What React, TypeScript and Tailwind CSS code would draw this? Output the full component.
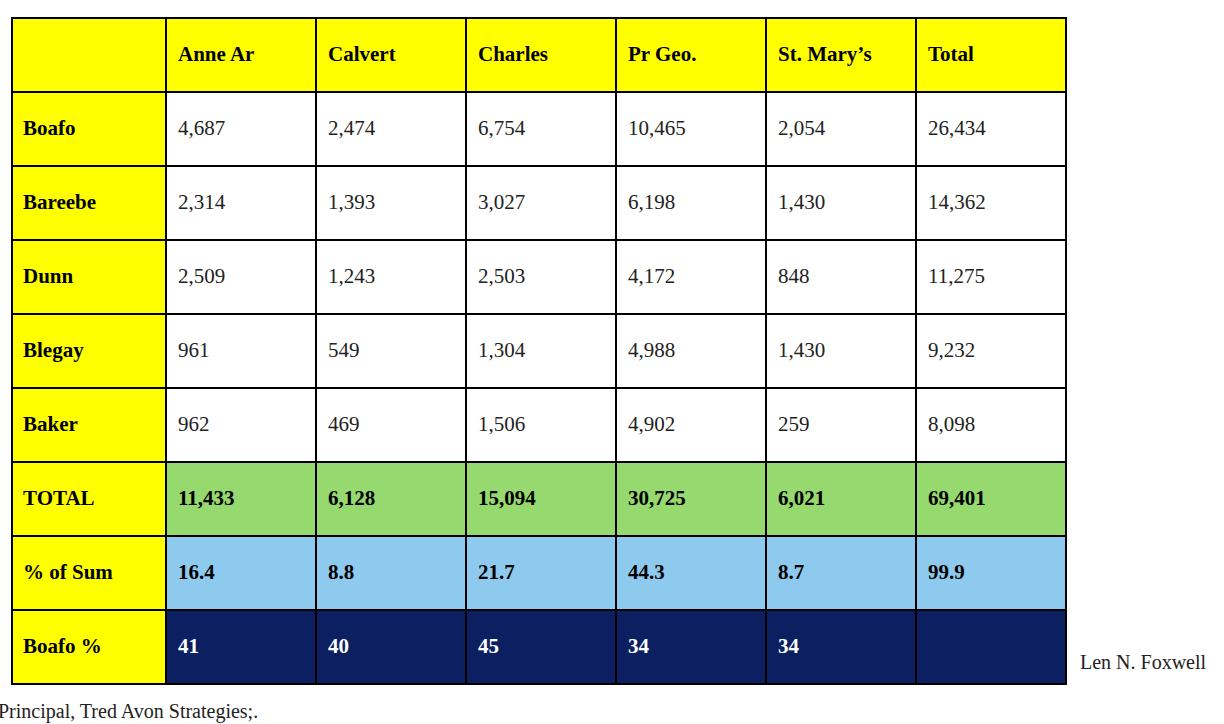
import { Fragment } from 'react';

const cols = ['Anne Ar', 'Calvert', 'Charles', 'Pr Geo.', 'St. Mary\u2019s', 'Total'];

type Row = {
  label: string;
  values: string[];
  cell: string;
};

const rows: Row[] = [
  { label: 'Boafo', values: ['4,687', '2,474', '6,754', '10,465', '2,054', '26,434'], cell: 'bg-white text-[#222]' },
  { label: 'Bareebe', values: ['2,314', '1,393', '3,027', '6,198', '1,430', '14,362'], cell: 'bg-white text-[#222]' },
  { label: 'Dunn', values: ['2,509', '1,243', '2,503', '4,172', '848', '11,275'], cell: 'bg-white text-[#222]' },
  { label: 'Blegay', values: ['961', '549', '1,304', '4,988', '1,430', '9,232'], cell: 'bg-white text-[#222]' },
  { label: 'Baker', values: ['962', '469', '1,506', '4,902', '259', '8,098'], cell: 'bg-white text-[#222]' },
  { label: 'TOTAL', values: ['11,433', '6,128', '15,094', '30,725', '6,021', '69,401'], cell: 'bg-[#95d96f] text-black font-bold' },
  { label: '% of Sum', values: ['16.4', '8.8', '21.7', '44.3', '8.7', '99.9'], cell: 'bg-[#8ecaee] text-black font-bold' },
  { label: 'Boafo %', values: ['41', '40', '45', '34', '34', ''], cell: 'bg-[#0b1f61] text-white font-bold' },
];

export default function App() {
  return (
    <div className="min-h-screen bg-white font-['Liberation_Serif',serif] text-[#222]">
      <div className="flex items-end pt-[17px] pl-[11px]">
        <div className="grid grid-cols-[152px_repeat(6,148px)] auto-rows-[72px] gap-[2px] bg-black p-[2px] text-[21px]">
          <div className="bg-[#ffff00]" />
          {cols.map((c) => (
            <div key={c} className="flex items-center bg-[#ffff00] pl-[11px] font-bold text-black">
              {c}
            </div>
          ))}
          {rows.map((r) => (
            <Fragment key={r.label}>
              <div className="flex items-center bg-[#ffff00] pl-[10px] font-bold text-black">
                {r.label}
              </div>
              {r.values.map((v, i) => (
                <div key={i} className={`flex items-center pl-[11px] ${r.cell}`}>
                  {v}
                </div>
              ))}
            </Fragment>
          ))}
        </div>
        <div className="ml-[13px] mb-[11px] text-[20px] leading-[23px] text-[#222]">Len N. Foxwell</div>
      </div>
      <p className="mt-[15px] ml-[-2px] text-[20px] leading-[23px] text-[#222]">Principal, Tred Avon Strategies;.</p>
    </div>
  );
}
